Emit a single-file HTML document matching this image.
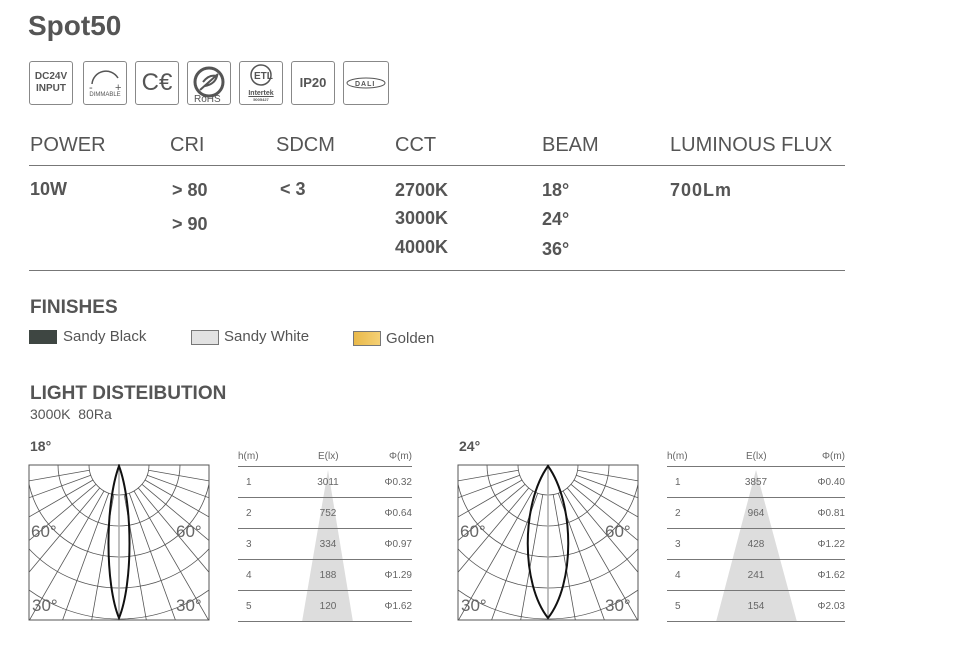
<!DOCTYPE html>
<html><head><meta charset="utf-8"><style>
html,body{margin:0;width:959px;height:647px;overflow:hidden}
body{background:#fff;font-family:"Liberation Sans",sans-serif;color:#555;position:relative}
.a{position:absolute;white-space:nowrap}
.ic{position:absolute;top:61px;height:44px;border:1px solid #888;border-radius:3px;box-sizing:border-box;text-align:center;color:#555;font-weight:bold}
.h{font-size:20px;color:#555;top:134px}
.v{font-size:18px;font-weight:bold;color:#555}
</style></head><body>
<div class="a" style="left:28px;top:10px;font-size:28px;font-weight:bold;color:#555">Spot50</div>
<div class="ic" style="left:29px;width:44px;font-size:10px;line-height:12px;padding-top:9px">DC24V<br>INPUT</div>
<div class="ic" style="left:83px;width:44px;font-size:6px;font-weight:normal"><svg width="42" height="30"><path d="M8 22 A14 14 0 0 1 34 16" fill="none" stroke="#555" stroke-width="1.5"/><text x="5" y="29" font-size="11" fill="#555">-</text><text x="31" y="29" font-size="11" fill="#555">+</text></svg><div style="margin-top:-2px">DIMMABLE</div></div>
<div class="ic" style="left:135px;width:44px;font-size:24px;font-weight:normal;line-height:42px">C€</div>
<div class="ic" style="left:187px;width:44px"><svg width="42" height="42"><circle cx="21" cy="20" r="14" fill="none" stroke="#555" stroke-width="3"/><path d="M12 28 L30 12 M15 20 q6-8 14-6 q-2 8-12 10" stroke="#555" fill="none" stroke-width="2"/><text x="6" y="40" font-size="10" fill="#555" font-weight="normal">RoHS</text></svg></div>
<div class="ic" style="left:239px;width:44px;font-size:7px"><svg width="42" height="26"><circle cx="21" cy="13" r="10" fill="none" stroke="#555" stroke-width="1.5"/><text x="14" y="17" font-size="10" fill="#555" font-weight="bold">ETL</text></svg><div style="line-height:7px;text-decoration:underline">Intertek</div><div style="font-size:4px">5005427</div></div>
<div class="ic" style="left:291px;width:44px;font-size:13px;line-height:42px">IP20</div>
<div class="ic" style="left:343px;width:46px"><svg width="44" height="42"><ellipse cx="22" cy="21" rx="19" ry="5" fill="none" stroke="#555"/><text x="11" y="24" font-size="7" fill="#555" font-weight="bold" letter-spacing="1">DALI</text></svg></div>

<div class="a h" style="left:30px">POWER</div><div class="a h" style="left:170px">CRI</div><div class="a h" style="left:276px">SDCM</div><div class="a h" style="left:395px">CCT</div><div class="a h" style="left:542px">BEAM</div><div class="a h" style="left:670px">LUMINOUS FLUX</div>
<div class="a" style="left:29px;top:165px;width:816px;height:1px;background:#777"></div>
<div class="a" style="left:29px;top:270px;width:816px;height:1px;background:#777"></div>
<div class="a v" style="left:30px;top:179px">10W</div>
<div class="a v" style="left:172px;top:180px">&gt; 80</div><div class="a v" style="left:172px;top:214px">&gt; 90</div>
<div class="a v" style="left:280px;top:179px">&lt; 3</div>
<div class="a v" style="left:395px;top:180px">2700K</div><div class="a v" style="left:395px;top:208px">3000K</div><div class="a v" style="left:395px;top:237px">4000K</div>
<div class="a v" style="left:542px;top:180px">18°</div><div class="a v" style="left:542px;top:209px">24°</div><div class="a v" style="left:542px;top:239px">36°</div>
<div class="a v" style="left:670px;top:180px;letter-spacing:1px">700Lm</div>

<div class="a" style="left:30px;top:297px;font-size:19px;font-weight:bold">FINISHES</div>
<div class="a" style="left:29px;top:330px;width:28px;height:14px;background:#3e4642"></div>
<div class="a" style="left:63px;top:328px;font-size:15px">Sandy Black</div>
<div class="a" style="left:191px;top:330px;width:26px;height:13px;background:#e2e2e2;border:1px solid #777"></div>
<div class="a" style="left:224px;top:328px;font-size:15px">Sandy White</div>
<div class="a" style="left:353px;top:331px;width:26px;height:13px;background:linear-gradient(90deg,#e9b94a,#f5d074);border:1px solid #777"></div>
<div class="a" style="left:386px;top:330px;font-size:15px">Golden</div>
<div class="a" style="left:30px;top:383px;font-size:19px;font-weight:bold">LIGHT DISTEIBUTION</div>
<div class="a" style="left:30px;top:406px;font-size:14px">3000K&nbsp; 80Ra</div>

<div class="a" style="left:30px;top:438px;font-size:14px;font-weight:bold">18°</div>
<div class="a" style="left:459px;top:438px;font-size:14px;font-weight:bold">24°</div>
<svg id="p1" class="a" style="left:28px;top:464px" width="182" height="157"></svg>
<svg id="p2" class="a" style="left:457px;top:464px" width="182" height="157"></svg>
<svg id="t1" class="a" style="left:236px;top:448px" width="180" height="176"></svg>
<svg id="t2" class="a" style="left:665px;top:448px" width="184" height="176"></svg>
<script>
function polar(id,w){var s='<clipPath id="c'+id+'"><rect x="1" y="1" width="180" height="155"/></clipPath><g clip-path="url(#c'+id+')" stroke="#555" stroke-width="0.8" fill="none">';
var cx=91,cy=1;for(var r=30;r<=180;r+=31)s+='<circle cx="'+cx+'" cy="'+cy+'" r="'+r+'"/>';
for(var a=-90;a<=90;a+=10){if(a==0)continue;var t=a*Math.PI/180;s+='<line x1="'+(cx+30*Math.sin(t))+'" y1="'+(cy+30*Math.cos(t))+'" x2="'+(cx+300*Math.sin(t))+'" y2="'+(cy+300*Math.cos(t))+'"/>';}
s+='<line x1="91" y1="1" x2="91" y2="156" stroke="#aaa" stroke-width="1.5"/></g><rect x="1" y="1" width="180" height="155" fill="none" stroke="#555"/>';
s+='<path d="M91 2 C'+(91-w)+' 40 '+(91-w)+' 120 91 154 C'+(91+w)+' 120 '+(91+w)+' 40 91 2Z" fill="none" stroke="#111" stroke-width="2"/>';
s+='<g font-size="17" fill="#666" font-family="Liberation Sans"><text x="3" y="73">60°</text><text x="148" y="73">60°</text><text x="4" y="147">30°</text><text x="148" y="147">30°</text></g>';
document.getElementById(id).innerHTML=s;}
polar('p1',14);polar('p2',27);
function tab(id,w,ax,b1,b2,E,P){var s='<polygon points="'+ax+',22 '+b1+',174 '+b2+',174" fill="#ddd"/><g font-family="Liberation Sans" fill="#666" font-size="10"><text x="2" y="11">h(m)</text><text x="'+(ax-10)+'" y="11">E(lx)</text><text x="'+(w-2)+'" y="11" text-anchor="end">Φ(m)</text>';
for(var i=0;i<6;i++)s+='<rect x="2" y="'+(18+i*31)+'" width="'+(w-4)+'" height="1" fill="#777"/>';
for(i=0;i<5;i++){var y=37+i*31;s+='<text x="10" y="'+y+'">'+(i+1)+'</text><text x="'+ax+'" y="'+y+'" text-anchor="middle">'+E[i]+'</text><text x="'+(w-2)+'" y="'+y+'" text-anchor="end">Φ'+P[i]+'</text>';}
document.getElementById(id).innerHTML=s+'</g>';}
tab('t1',178,92,66,117,[3011,752,334,188,120],['0.32','0.64','0.97','1.29','1.62']);
tab('t2',182,91,51,132,[3857,964,428,241,154],['0.40','0.81','1.22','1.62','2.03']);
</script>
</body></html>
